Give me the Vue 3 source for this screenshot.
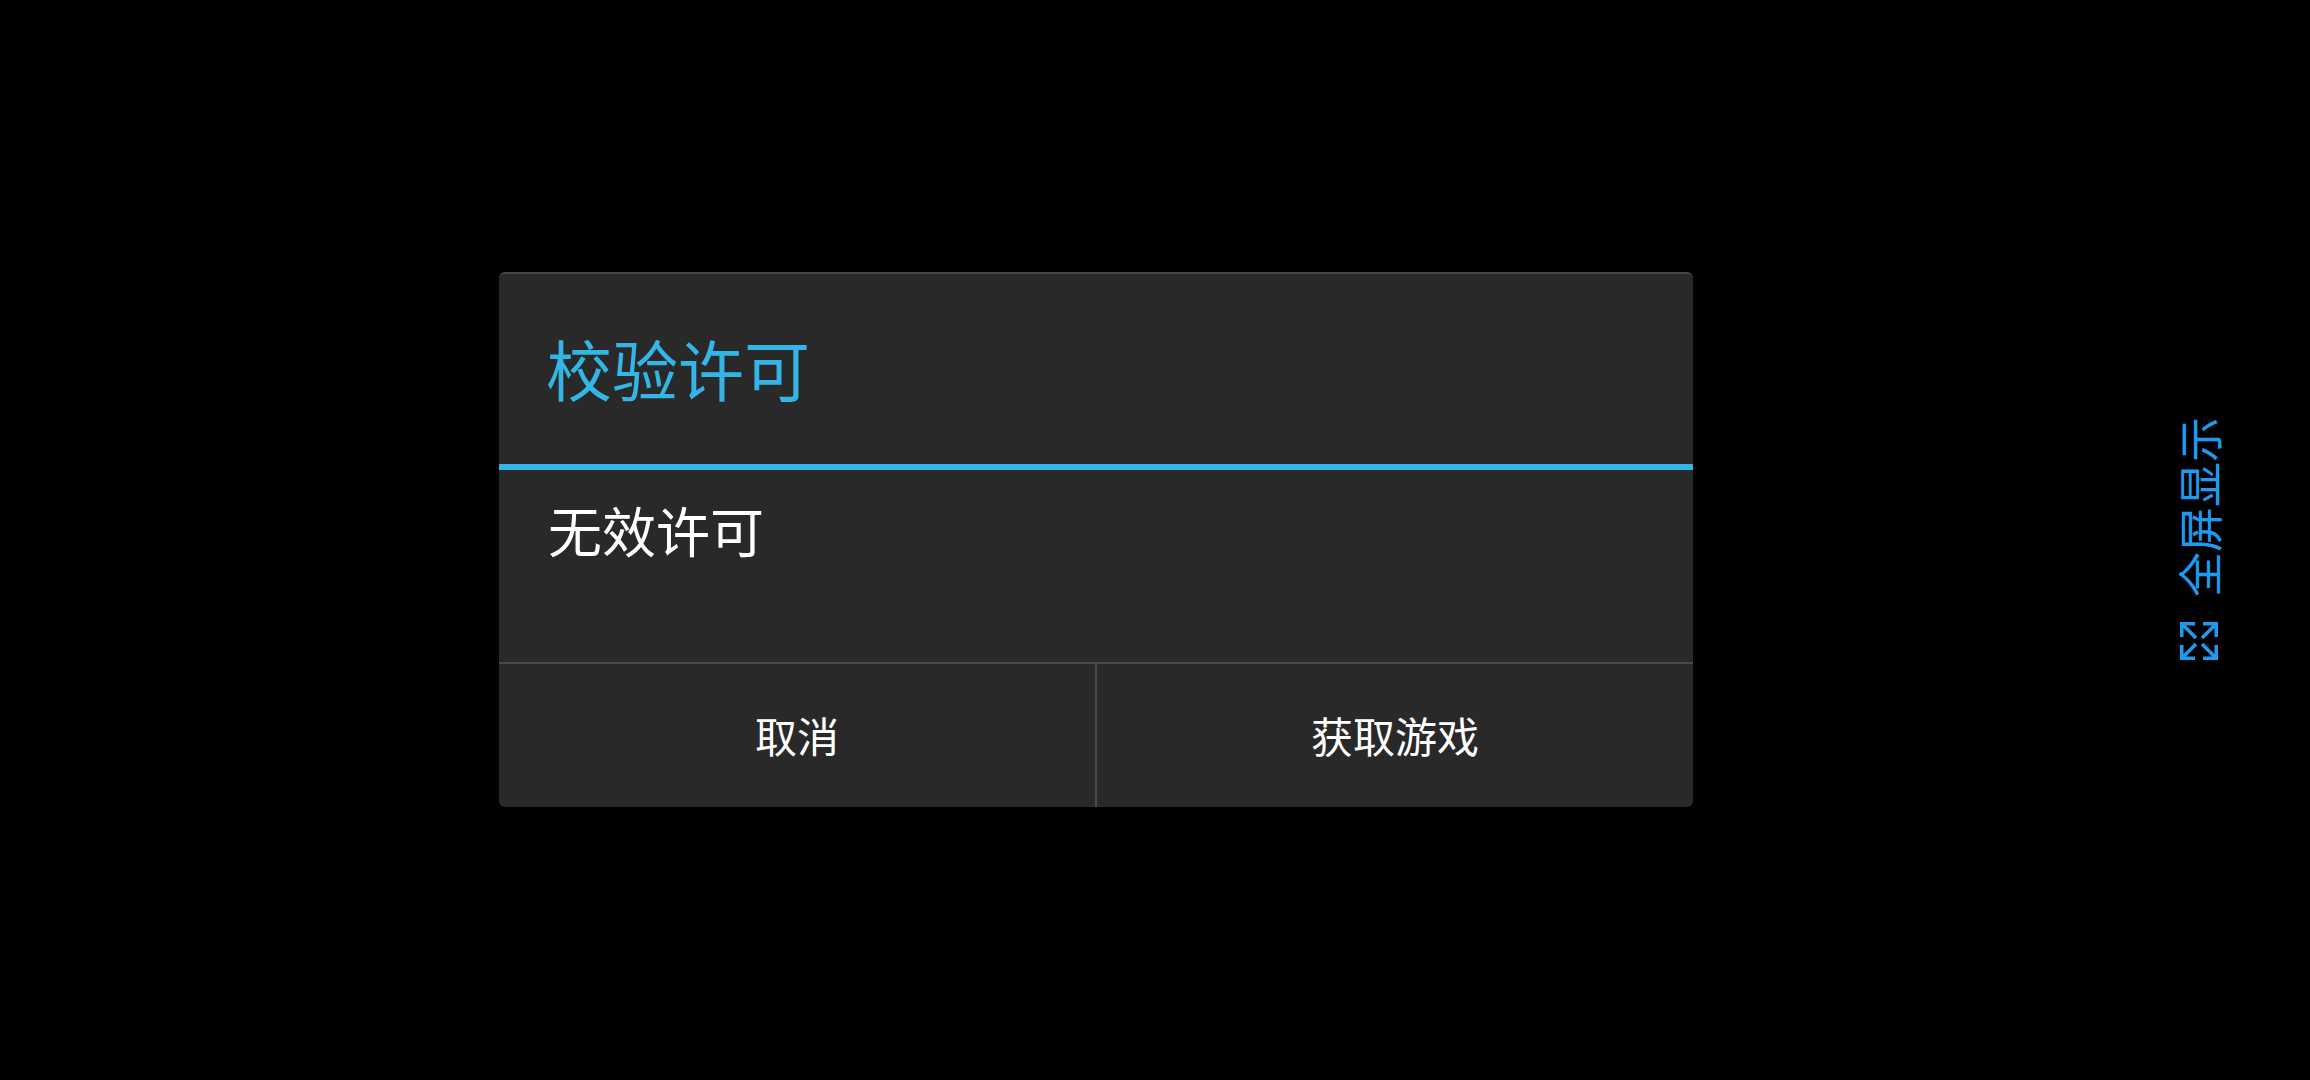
<template>
  <div class="screen">
    <div class="dialog">
      <div class="title">校验许可</div>
      <div class="title-line"></div>
      <div class="message">无效许可</div>
      <div class="buttons">
        <div class="btn">取消</div>
        <div class="btn">获取游戏</div>
      </div>
    </div>
    <div class="fullscreen">
      <span class="fullscreen-label">全屏显示</span>
      <svg class="fullscreen-icon" viewBox="0 0 38 38" fill="none" stroke="#1e9bf0" stroke-width="3.5">
        <path d="M1.75 15V1.75H15M23 1.75H36.25V15M1.75 23V36.25H15M23 36.25H36.25V23" />
        <path d="M3 3L16 16M35 3L22 16M3 35L16 22M35 35L22 22" />
      </svg>
    </div>
  </div>
</template>

<script setup>
</script>

<style>
html, body {
  background: #000;
}
</style>

<style scoped>
.screen {
  width: 2310px;
  height: 1080px;
  display: flex;
  align-items: center;
  padding-left: 499px;
  box-sizing: border-box;
  background: #000;
  font-family: "Noto Sans CJK SC", sans-serif;
  overflow: hidden;
}

.dialog {
  width: 1194px;
  height: 535px;
  margin-bottom: 1px;
  display: flex;
  flex-direction: column;
  background: #292929;
  border-top: 2px solid #454545;
  border-radius: 6px;
  box-sizing: border-box;
  overflow: hidden;
}

.title {
  height: 190px;
  padding: 0 0 4px 47px;
  box-sizing: border-box;
  display: flex;
  align-items: center;
  color: #33b5e5;
  font-size: 66px;
}

.title-line {
  height: 6px;
  background: #33b5e5;
}

.message {
  height: 192px;
  padding: 24px 49px 0;
  box-sizing: border-box;
  color: #fff;
  font-size: 54px;
  line-height: 72px;
}

.buttons {
  flex: 1;
  display: flex;
  border-top: 2px solid #4a4a4a;
}

.btn {
  flex: 1;
  display: flex;
  align-items: center;
  justify-content: center;
  padding-bottom: 3px;
  color: #fff;
  font-size: 42px;
}

.btn + .btn {
  border-left: 2px solid #4a4a4a;
}

.fullscreen {
  margin-left: 484px;
  display: flex;
  flex-direction: column;
  align-items: center;
  gap: 25px;
  width: 44px;
}

.fullscreen-label {
  writing-mode: vertical-rl;
  text-orientation: sideways;
  transform: rotate(180deg);
  color: #1e9bf0;
  font-size: 45px;
  line-height: 44px;
}

.fullscreen-icon {
  width: 38px;
  height: 38px;
  margin-bottom: 3px;
}
</style>
